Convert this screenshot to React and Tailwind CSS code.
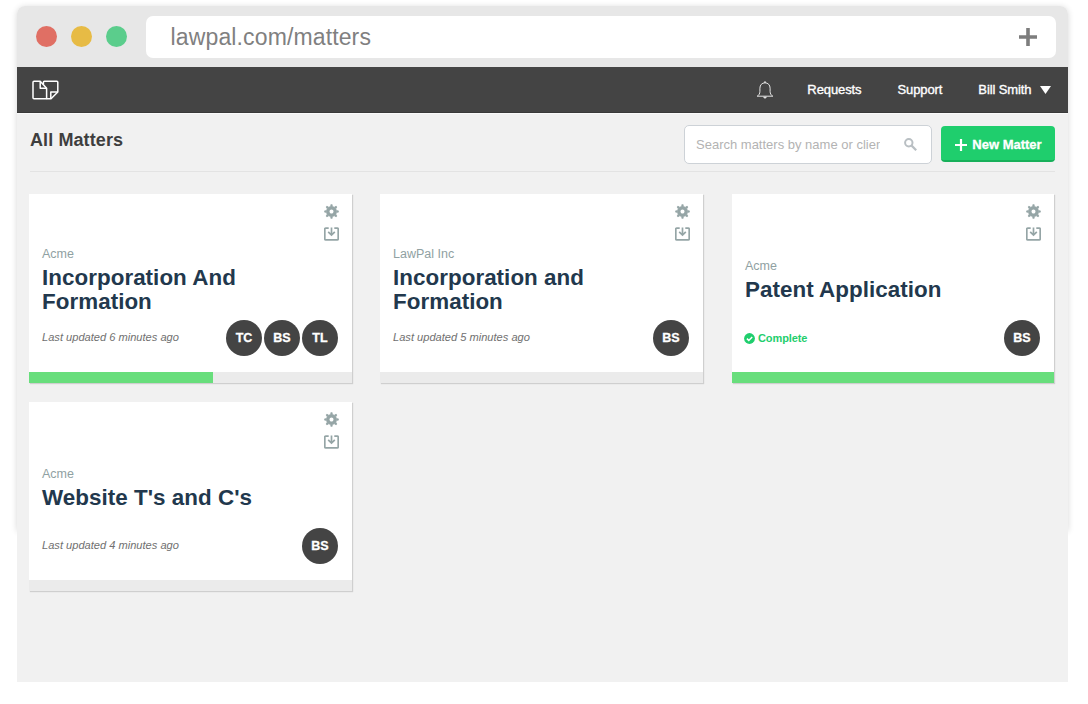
import React from "react";

const MATTERS = [
  { client: "Acme", title: "Incorporation And Formation", updated: "Last updated 6 minutes ago", people: ["TC", "BS", "TL"], progress: 57 },
  { client: "LawPal Inc", title: "Incorporation and Formation", updated: "Last updated 5 minutes ago", people: ["BS"], progress: 0 },
  { client: "Acme", title: "Patent Application", complete: true, people: ["BS"], progress: 100 },
  { client: "Acme", title: "Website T's and C's", updated: "Last updated 4 minutes ago", people: ["BS"], progress: 0 },
];

function Logo() {
  return (
    <svg className="h-5 w-7" viewBox="0 0 28 20" fill="none" stroke="#fff" strokeWidth="1.5" strokeLinejoin="round">
      <path d="M2 1.3H8.2L14.6 8.2V18.7H2Q1 18.7 1 17.7V2.3Q1 1.3 2 1.3Z" />
      <path d="M8.2 1.3V8.2H14.6" />
      <path d="M11.4 4.6V2.3Q11.4 1.3 12.4 1.3H24.8Q25.8 1.3 25.8 2.3V12L19 18.7H14.6" />
      <path d="M18.8 18.5V12H25.6" />
    </svg>
  );
}

function Bell() {
  return (
    <svg className="h-[18px] w-[18px]" viewBox="0 0 18 18" fill="none" stroke="#e4e4e4" strokeWidth="1">
      <path d="M1.2 15.2C3 14.2 3.9 12.6 3.9 10.4V7.2C3.9 4 6 1.8 9 1.8S14.1 4 14.1 7.2V10.4C14.1 12.6 15 14.2 16.8 15.2Z" strokeLinejoin="round" />
      <path d="M8 1.1H10" strokeWidth="1.4" />
      <path d="M7.6 16.2Q9 18.2 10.4 16.2Z" fill="#e4e4e4" />
    </svg>
  );
}

function Gear() {
  return (
    <svg className="h-[15px] w-[15px]" viewBox="-7.5 -7.5 15 15">
      <circle r="3.7" fill="none" stroke="#95a5a6" strokeWidth="3.4" />
      {[0, 45, 90, 135, 180, 225, 270, 315].map((a) => (
        <path key={a} d="M-1.4 -5L-.8 -7.3H.8L1.4 -5Z" fill="#95a5a6" transform={`rotate(${a})`} />
      ))}
    </svg>
  );
}

function Archive() {
  return (
    <svg className="h-[14px] w-[15px]" viewBox="0 0 15 14" fill="none" stroke="#95a5a6" strokeWidth="1.7">
      <path d="M4.7 1.2H1.7Q.8 1.2 .8 2.1V11.9Q.8 12.8 1.7 12.8H13.3Q14.2 12.8 14.2 11.9V2.1Q14.2 1.2 13.3 1.2H10.3" />
      <path d="M7.5 .6V8M4.2 4.8L7.5 8.1L10.8 4.8" />
    </svg>
  );
}

function Check() {
  return (
    <svg className="h-[11px] w-[11px]" viewBox="0 0 11 11">
      <circle cx="5.5" cy="5.5" r="5.4" fill="#1fce6d" />
      <path d="M2.9 5.6L4.8 7.4L8.2 3.9" fill="none" stroke="#fff" strokeWidth="1.5" />
    </svg>
  );
}

function Card({ m, wide }) {
  return (
    <article className={`${wide ? "w-[323px]" : "w-[322px]"} flex h-[189px] flex-col bg-white shadow-[1px_1px_1px_#cfcfcf]`}>
      <div className="flex h-[178px] flex-col px-[13px]">
        <div className="flex h-12 flex-col items-end gap-[8px] pt-[10px]">
          <Gear />
          <Archive />
        </div>
        <div className="flex h-[77px] flex-col justify-center">
          <div className="text-[12.5px] leading-[15px] text-[#90a1a2]">{m.client}</div>
          <h2 className="mt-1 w-[230px] text-[22.4px] leading-[24px] font-bold tracking-[0.04px] text-[#22384d]">{m.title}</h2>
        </div>
        <div className="mt-px flex h-9 items-center justify-between pr-px">
          {m.complete ? (
            <div className="-ml-px flex items-center gap-[3px] text-[11px] font-bold tracking-[-0.1px] text-[#1fce6d]">
              <Check />
              Complete
            </div>
          ) : (
            <div className="pb-px text-[11.1px] text-[#707070] italic">{m.updated}</div>
          )}
          <div className="flex gap-[2px]">
            {m.people.map((p) => (
              <div key={p} className="flex h-9 w-9 items-center justify-center rounded-full bg-[#444] text-[12.5px] font-bold text-white [-webkit-text-stroke:0.3px_white]">
                {p}
              </div>
            ))}
          </div>
        </div>
      </div>
      <div className="h-[11px] bg-[#ebebeb]">
        <div className="h-full bg-[#68de7c]" style={{ width: `${m.progress}%` }} />
      </div>
    </article>
  );
}

export default function App() {
  return (
    <div className="h-[704px] w-[1088px] overflow-hidden bg-white pt-[6px] pl-[17px] font-['Liberation_Sans',Arial,sans-serif]">
      <div className="h-[524px] w-[1051px] rounded-t-[8px] shadow-[0_1px_6px_rgba(0,0,0,0.16)]">
        <div className="flex h-[61px] items-center rounded-t-[8px] bg-[#e7e7e7] pr-[11.6px] pl-[19px]">
          <div className="flex gap-[14px]">
            <span className="h-[21px] w-[21px] rounded-full bg-[#e06f64]" />
            <span className="h-[21px] w-[21px] rounded-full bg-[#e7bb45]" />
            <span className="h-[21px] w-[21px] rounded-full bg-[#5bcd8c]" />
          </div>
          <div className="ml-[19.4px] flex h-[42px] flex-1 items-center justify-between rounded-[7px] bg-white pr-[19px] pl-[24.2px]">
            <span className="text-[23px] leading-[42px] tracking-[0.13px] text-[#808080]">lawpal.com/matters</span>
            <svg className="h-[18px] w-[18px]" viewBox="0 0 18 18" stroke="#7d7d7d" strokeWidth="3.6">
              <path d="M9 0V18M0 9H18" />
            </svg>
          </div>
        </div>

        <nav className="flex h-[46px] items-center justify-between border-b border-[#393939] bg-[#444] pr-[17px] pl-[15px]">
          <Logo />
          <div className="flex items-center text-[13px] tracking-[-0.1px] text-white [-webkit-text-stroke:0.35px_white]">
            <Bell />
            <span className="ml-[33px]">Requests</span>
            <span className="ml-9">Support</span>
            <span className="ml-9">Bill Smith</span>
            <svg className="ml-[8.5px] h-2 w-[11px]" viewBox="0 0 11 8" fill="#fff">
              <path d="M0 0H11L5.5 8Z" />
            </svg>
          </div>
        </nav>

        <main className="h-[569px] border-t border-[#fafafa] bg-[#f1f1f1] pr-[13px] pl-3">
          <header className="ml-px flex h-[58px] justify-between border-b border-[#e3e3e3] pt-[11px]">
            <h1 className="mt-[5px] text-[18px] leading-5 font-bold tracking-[0.1px] text-[#3e3e3e]">All Matters</h1>
            <div className="flex gap-[9px]">
              <div className="flex h-[39px] w-[248px] items-center justify-between rounded-[5px] border border-[#cdd2d7] bg-white pr-[14px] pl-[11px]">
                <input
                  className="w-[184px] text-[13px] text-[#444] outline-none placeholder:text-[#b3b3b3]"
                  placeholder="Search matters by name or client"
                />
                <svg className="h-[13px] w-[13px]" viewBox="0 0 13 13" fill="none" stroke="#b9bfc3">
                  <circle cx="4.8" cy="4.8" r="3.7" strokeWidth="2" />
                  <path d="M7.6 7.6L12.2 12.2" strokeWidth="2.2" />
                </svg>
              </div>
              <button className="mt-px flex h-9 w-[114px] items-center justify-center gap-[5px] rounded-[4px] border-b-2 border-[#17b05a] bg-[#1fce6d] pt-[3px] pl-px text-[13px] font-bold text-white">
                <svg className="h-3 w-3" viewBox="0 0 12 12" stroke="#fff" strokeWidth="2.2">
                  <path d="M6 0V12M0 6H12" />
                </svg>
                <span className="[-webkit-text-stroke:0.3px_white]">New Matter</span>
              </button>
            </div>
          </header>
          <section className="mt-[22px] grid grid-cols-[351px_352px_322px] gap-y-[19px]">
            {MATTERS.map((m, i) => (
              <Card key={i} m={m} wide={i !== 2} />
            ))}
          </section>
        </main>
      </div>
    </div>
  );
}
